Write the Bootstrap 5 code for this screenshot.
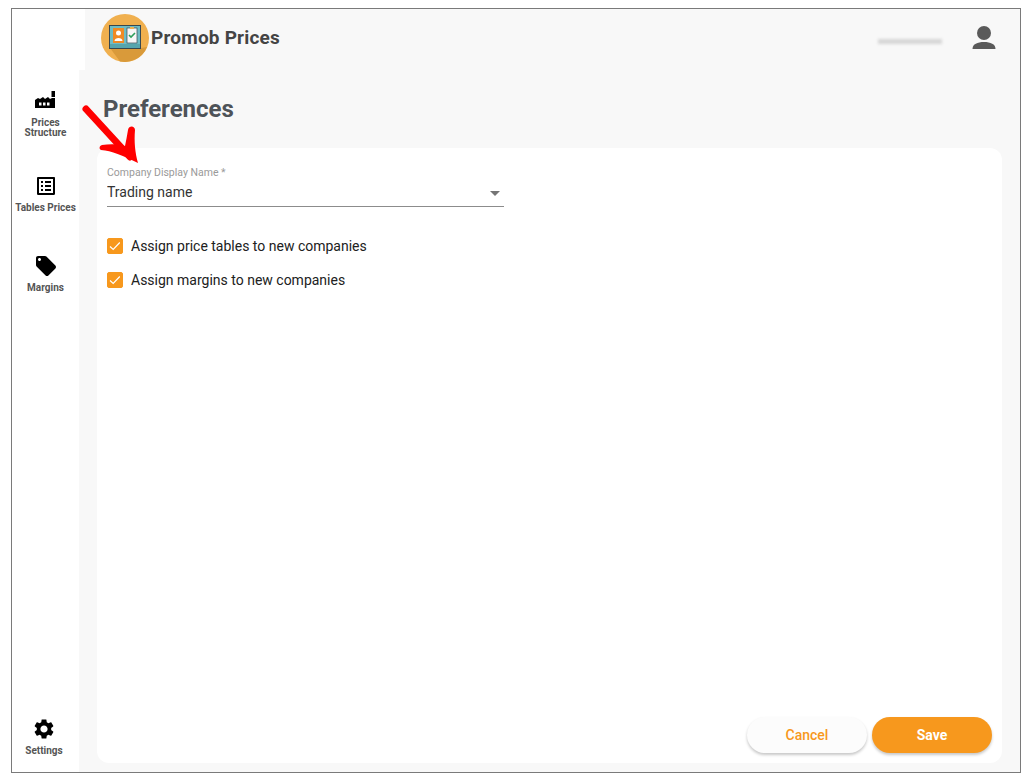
<!DOCTYPE html>
<html lang="en">
<head>
<meta charset="utf-8">
<title>Promob Prices</title>
<link href="https://cdn.jsdelivr.net/npm/bootstrap@5.3.0/dist/css/bootstrap.min.css" rel="stylesheet">
<style>
html,body{height:100%;background:#fff;overflow:hidden}
body{font-family:Roboto,"Liberation Sans",sans-serif;color:#212121}
.shot-frame{position:relative;width:1010px;height:765px;margin:8px 0 0 11px;border:1px solid #7a7a7a;background:#fff}
.side-rail{width:67px;padding-top:82px;padding-bottom:16px;flex:none}
.rail-item{display:flex;flex-direction:column;align-items:center;color:#555;font-size:10px;font-weight:700;line-height:10px;text-align:center;text-decoration:none;height:82px}
.rail-item svg{width:24px;height:24px;fill:#000;margin-bottom:3px}
.rail-item.rail-bottom{height:auto;margin-left:-3px}
.rail-item.rail-tables{height:81px}
.rail-tables svg{margin-top:1px;margin-bottom:5px}
.rail-tags svg{margin-bottom:5px}
.rail-bottom svg{margin-bottom:5px}
.top-strip{height:61px;margin-left:6px;background:#f8f8f8;padding:0 21px 3px 16px}
.brand-name{font-size:19px;font-weight:700;color:#444;letter-spacing:.2px;margin-left:2px}
.blur-line{width:64px;height:5px;background:#d6d6d6;filter:blur(1.5px);margin-right:27px;margin-top:7px}
.work-area{background:#f8f8f8;padding:0 18px 9px 18px;min-height:0}
.page-heading{font-size:24px;font-weight:700;color:#4e5358;margin:0;line-height:30px;padding:24px 0 24px 6px;letter-spacing:-.03px}
.pref-panel{background:#fff;border-radius:12px;padding:19px 10px 10px 10px;min-height:0}
.pref-label{font-size:10.5px;line-height:12px;color:#9a9a9a;margin:0;display:block}
.pref-select{width:397px;border:0;border-bottom:1px solid #8c8c8c;border-radius:0;padding:3px 0 4px 0;font-size:14px;line-height:20px;height:28px;color:#333;background-color:transparent;background-position:right 4px top 12px;background-size:10px 5px;background-image:url("data:image/svg+xml,%3Csvg xmlns='http://www.w3.org/2000/svg' viewBox='0 0 10 5'%3E%3Cpath d='M0 0h10L5 5z' fill='%23757575'/%3E%3C/svg%3E")}
.pref-select:focus{box-shadow:none;border-color:#8c8c8c}
.pref-check{display:flex;align-items:center;min-height:16px;margin:0;padding:0;font-size:14px;line-height:16px;color:#212121}
.pref-check-first{margin-top:31px}
.pref-check-next{margin-top:18px}
.pref-check .form-check-input{float:none;width:16px;height:16px;margin:0 8px 0 0;background-color:#f7981d;border-color:#f7981d;border-radius:2px;flex:none;background-size:16px 16px;background-image:url("data:image/svg+xml,%3Csvg xmlns='http://www.w3.org/2000/svg' viewBox='0 0 16 16'%3E%3Cpath d='M3 8.500l3.200 3L12.800 4.500' fill='none' stroke='%23fff' stroke-width='1.200'/%3E%3C/svg%3E")}
.pref-action{width:120px;height:36px;border-radius:18px;font-size:14px;padding:0;border:0;box-shadow:0 2px 3px rgba(0,0,0,.22)}
.pref-cancel{background:#fcfcfc;color:#f7981d;font-weight:500}
.pref-save{background:#f7981d;color:#fff;font-weight:700}
.pref-cancel:hover{background:#fcfcfc;color:#f7981d}
.pref-save:hover{background:#f7981d;color:#fff}
.pref-actions{gap:5px}
.callout-arrow{position:absolute;left:70px;top:96px;width:62px;height:62px;pointer-events:none}
</style>
</head>
<body>
<div class="shot-frame d-flex">
  <nav class="side-rail d-flex flex-column">
    <a class="rail-item" href="#">
      <svg viewBox="0 0 24 24"><path d="M17.500 0H21v6h-3.500z"/><path d="M1 17V9l3-2 2 1 3-2 2 2 3-2 2 2 2-1h3v10zM5 11.500v3h2.500v-3zm4 0v3h2.500v-3zm4 0v3h2.500v-3z" fill-rule="evenodd"/></svg>
      <span>Prices<br>Structure</span>
    </a>
    <a class="rail-item rail-tables" href="#">
      <svg viewBox="0 0 24 24"><path d="M19 5v14H5V5h14m1.100-2H3.900c-.5 0-.9.4-.9.9v16.200c0 .4.400.9.900.9h16.200c.4 0 .9-.5.9-.9V3.900c0-.5-.5-.9-.9-.9zM11 7h6v2h-6V7zm0 4h6v2h-6v-2zm0 4h6v2h-6zM7 7h2v2H7zm0 4h2v2H7zm0 4h2v2H7z"/></svg>
      <span>Tables Prices</span>
    </a>
    <a class="rail-item rail-tags" href="#">
      <svg viewBox="0 0 24 24"><path d="M21.41 11.58l-9-9C12.05 2.22 11.55 2 11 2H4c-1.1 0-2 .9-2 2v7c0 .55.22 1.05.59 1.42l9 9c.36.36.86.58 1.41.58.55 0 1.05-.22 1.41-.59l7-7c.37-.36.59-.86.59-1.41 0-.55-.23-1.06-.59-1.42zM5.5 7C4.67 7 4 6.33 4 5.5S4.67 4 5.5 4 7 4.67 7 5.5 6.33 7 5.5 7z"/></svg>
      <span>Margins</span>
    </a>
    <a class="rail-item rail-bottom mt-auto" href="#">
      <svg viewBox="0 0 24 24"><path d="M19.14 12.94c.04-.3.06-.61.06-.94 0-.32-.02-.64-.07-.94l2.03-1.58c.18-.14.23-.41.12-.61l-1.92-3.32c-.12-.22-.37-.29-.59-.22l-2.39.96c-.5-.38-1.03-.7-1.62-.94l-.36-2.54c-.04-.24-.24-.41-.48-.41h-3.84c-.24 0-.43.17-.47.41l-.36 2.54c-.59.24-1.13.57-1.62.94l-2.39-.96c-.22-.08-.47 0-.59.22L2.74 8.87c-.12.21-.08.47.12.61l2.03 1.58c-.05.3-.09.63-.09.94s.02.64.07.94l-2.03 1.58c-.18.14-.23.41-.12.61l1.92 3.32c.12.22.37.29.59.22l2.39-.96c.5.38 1.03.7 1.62.94l.36 2.54c.05.24.24.41.48.41h3.84c.24 0 .44-.17.47-.41l.36-2.54c.59-.24 1.13-.56 1.62-.94l2.39.96c.22.08.47 0 .59-.22l1.92-3.32c.12-.22.07-.47-.12-.61l-2.01-1.58zM12 15.6c-1.98 0-3.6-1.62-3.6-3.6s1.62-3.6 3.6-3.6 3.6 1.62 3.6 3.6-1.62 3.6-3.6 3.6z"/></svg>
      <span>Settings</span>
    </a>
  </nav>
  <div class="d-flex flex-column flex-grow-1">
    <header class="top-strip d-flex align-items-center">
      <svg width="48" height="48" viewBox="0 0 48 48">
        <circle cx="24" cy="24" r="24" fill="#f0b04f"/>
        <path d="M9 34h31L46 33A24 24 0 0 1 19 47.500z" fill="#d99a3a"/>
        <rect x="8" y="11" width="32" height="24" fill="#37474f"/>
        <rect x="9" y="12" width="30" height="22" fill="#6fbcc4"/>
        <rect x="9" y="30" width="30" height="4" fill="#56a5ad"/>
        <rect x="12" y="14" width="11" height="15" fill="#f08a24"/>
        <circle cx="17.500" cy="19" r="2.500" fill="#fff"/>
        <path d="M13.500 27c0-4 8-4 8 0z" fill="#fff"/>
        <rect x="26" y="14" width="10" height="15" fill="#f7f7f7" stroke="#37474f" stroke-width=".7"/>
        <path d="M28 21l2 2 4-4" fill="none" stroke="#2e9e5b" stroke-width="1.600"/>
        <rect x="29" y="13" width="4" height="2" fill="#f0b04f"/>
      </svg>
      <span class="brand-name">Promob Prices</span>
      <div class="blur-line ms-auto"></div>
      <svg width="30" height="30" viewBox="0 0 30 30"><circle cx="15" cy="10" r="7" fill="#5a5a5a"/><path d="M3.500 26c0-5 5-7 11.500-7s11.500 2 11.500 7z" fill="#5a5a5a"/></svg>
    </header>
    <main class="work-area flex-grow-1 d-flex flex-column">
      <h1 class="page-heading">Preferences</h1>
      <section class="pref-panel flex-grow-1 d-flex flex-column">
        <label class="pref-label" for="displayName">Company Display Name *</label>
        <select class="form-select pref-select" id="displayName"><option>Trading name</option></select>
        <div class="form-check pref-check pref-check-first">
          <input class="form-check-input" type="checkbox" id="chkTables" checked>
          <label class="form-check-label" for="chkTables">Assign price tables to new companies</label>
        </div>
        <div class="form-check pref-check pref-check-next">
          <input class="form-check-input" type="checkbox" id="chkMargins" checked>
          <label class="form-check-label" for="chkMargins">Assign margins to new companies</label>
        </div>
        <div class="d-flex justify-content-end pref-actions mt-auto">
          <button type="button" class="btn pref-action pref-cancel">Cancel</button>
          <button type="button" class="btn pref-action pref-save">Save</button>
        </div>
      </section>
    </main>
  </div>
  <svg class="callout-arrow" viewBox="0 0 62 62"><path d="M4 4l44 48" stroke="#ff0000" stroke-width="7" stroke-linecap="round" fill="none"/><path d="M19 45c11 1 21 5 37 13 -3-10-4-22-3-33 0-4-6-5-7 0-1 6-2 11-3 16-7-2-15-2-23-1-3 1-3 4-1 5z" fill="#ff0000"/></svg>
</div>
<script src="https://cdn.jsdelivr.net/npm/bootstrap@5.3.0/dist/js/bootstrap.bundle.min.js"></script>
</body>
</html>
